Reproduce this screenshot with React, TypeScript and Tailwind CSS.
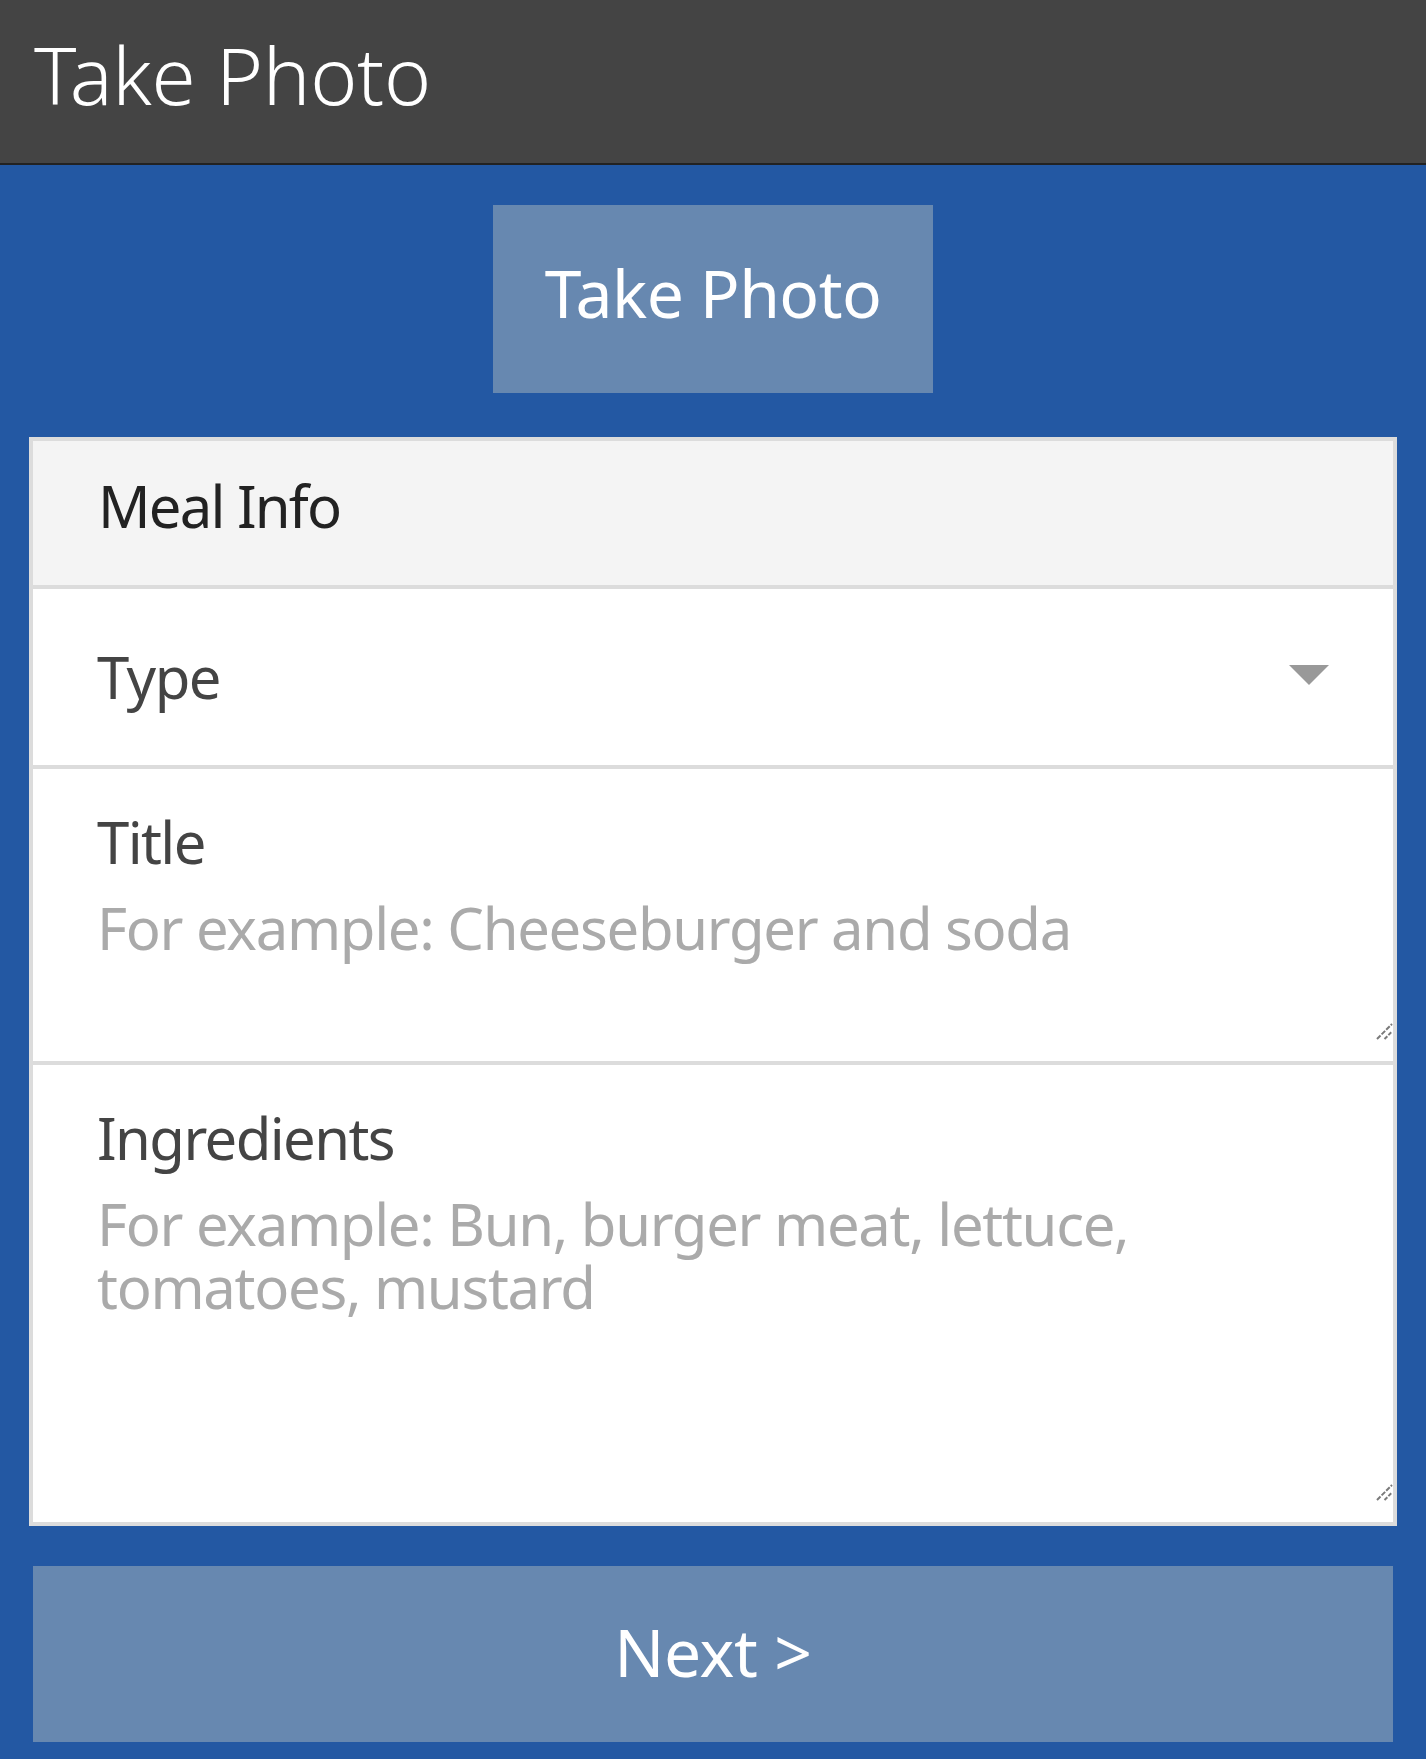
import { useState } from "react";

const font = { fontFamily: '"Noto Sans", "Open Sans", sans-serif' };

// grip drawn in the textarea's bottom right corner
function Grip() {
  return (
    <svg
      width="17"
      height="17"
      viewBox="0 0 17 17"
      className="pointer-events-none absolute bottom-[1px] right-[0px]"
    >
      <line x1="1" y1="16" x2="16" y2="1" stroke="#7a7a7a" strokeWidth="2" strokeDasharray="5 1.5" />
      <line x1="8.5" y1="16" x2="16" y2="8.5" stroke="#7a7a7a" strokeWidth="2" strokeDasharray="4 1.5" />
    </svg>
  );
}

function FieldRow({
  label,
  placeholder,
  height,
}: {
  label: string;
  placeholder: string;
  height: string;
}) {
  const [value, setValue] = useState("");
  return (
    <div className="flex flex-col border-t-4 border-[#dcdcdc] bg-white pt-[33px] pb-[20px]">
      <label className="pl-[64px] text-[58px] leading-[80px] tracking-[-1.6px] text-[#444]">{label}</label>
      <div className="relative">
        <textarea
          value={value}
          onChange={(e) => setValue(e.target.value)}
          placeholder={placeholder}
          className={`block w-full ${height} resize-none bg-white pt-[14px] pl-[64px] pr-[66px] text-[58px] leading-[63px] tracking-[-1.3px] text-[#333] outline-none placeholder:text-[#aaaaaa]`}
        />
        <Grip />
      </div>
    </div>
  );
}

export default function App() {
  return (
    <div style={font} className="min-h-[1759px] w-full bg-[#2358a3]">
      {/* top bar */}
      <div className="flex h-[165px] items-center border-b-2 border-[#222] bg-[#444444] pb-[16px] pl-[34px]">
        <h1 className="text-[80px] font-light leading-none tracking-[-0.3px] text-white">Take Photo</h1>
      </div>

      <div className="flex justify-center pt-[40px]">
        <button className="h-[188px] w-[440px] bg-[#6788b0] pb-[14px] text-[66px] tracking-[-0.6px] text-white">
          Take Photo
        </button>
      </div>

      {/* meal info card */}
      <div className="mx-[29px] mt-[44px] border-4 border-[#dcdcdc]">
        <div className="h-[144px] bg-[#f4f4f4] pl-[65px] pt-[25px] text-[58px] leading-[80px] tracking-[-1.8px] text-[#222]">
          Meal Info
        </div>
        <div className="flex h-[180px] items-center justify-between border-t-4 border-[#dcdcdc] bg-white pl-[64px] pr-[64px]">
          <span className="text-[58px] leading-[80px] tracking-[-1.5px] text-[#444]">Type</span>
          <svg width="40" height="20" viewBox="0 0 40 20" className="mb-[4px]">
            <polygon points="0,0 40,0 20,20" fill="#999999" />
          </svg>
        </div>
        <FieldRow
          label="Title"
          placeholder="For example: Cheeseburger and soda"
          height="h-[159px]"
        />
        <FieldRow
          label="Ingredients"
          placeholder="For example: Bun, burger meat, lettuce, tomatoes, mustard"
          height="h-[324px]"
        />
      </div>

      <div className="mx-[33px] mt-[40px]">
        <button className="h-[176px] w-full bg-[#6788b0] pb-[6px] text-[66px] tracking-[-0.4px] text-white">
          Next &gt;
        </button>
      </div>
    </div>
  );
}
